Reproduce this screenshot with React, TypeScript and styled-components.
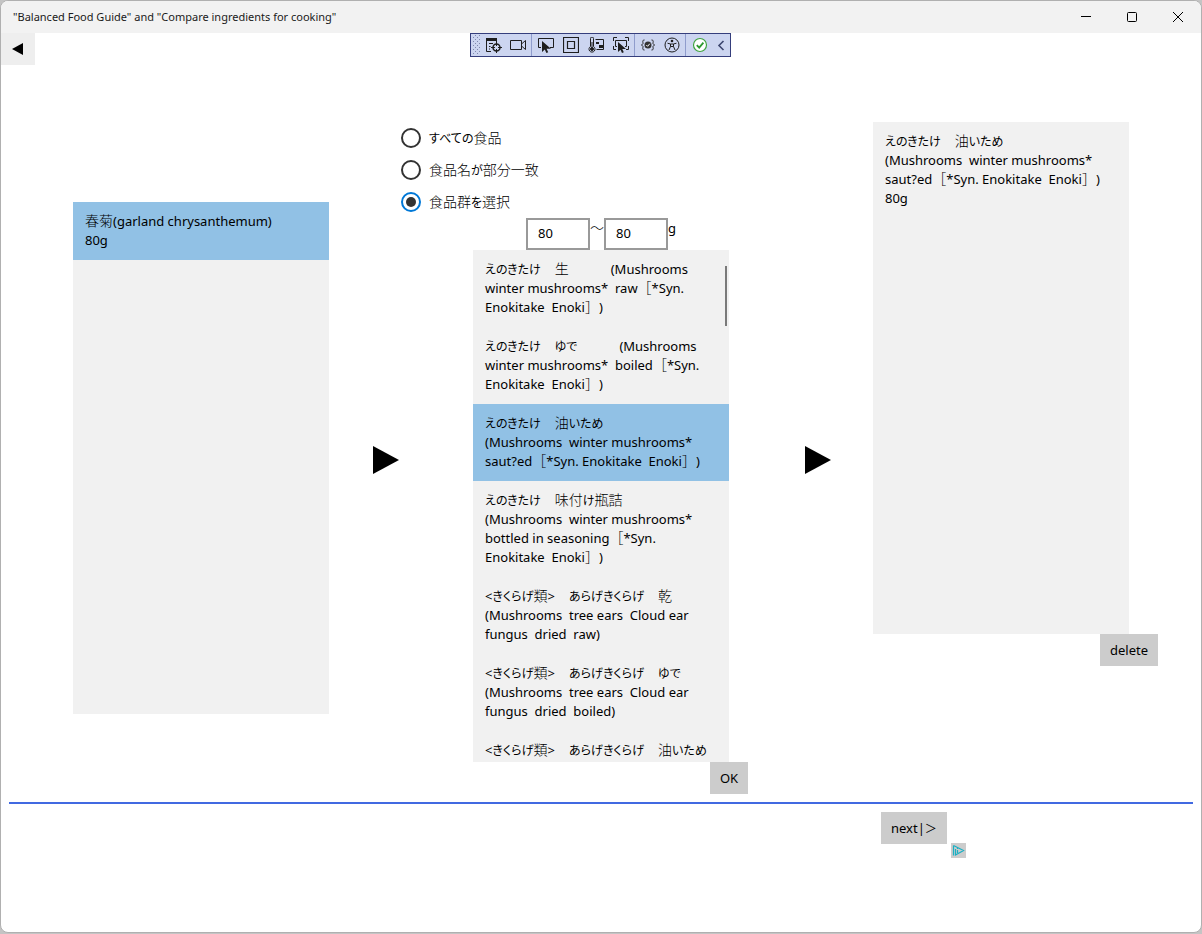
import React, { useState } from "react";
import styled, { createGlobalStyle } from "styled-components";

const GlobalStyle = createGlobalStyle`
  *, *::before, *::after { box-sizing: border-box; }
  body {
    margin: 0;
    background: #c4c4c4;
    color: #000;
    font-family: "Noto Sans", "Noto Sans CJK JP", sans-serif;
    font-size: 13px;
    line-height: 19px;
    text-spacing-trim: space-all;
  }
  button, input { font: inherit; color: inherit; margin: 0; }
  button { border: 0; padding: 0; background: none; }
`;

const AppWindow = styled.div`
  position: relative;
  display: flex;
  flex-direction: column;
  min-height: calc(100vh - 1px);
  border: 1px solid #b0b0b0;
  border-radius: 8px;
  background: #fff;
  overflow: hidden;
`;

const TitleBar = styled.header`
  display: flex;
  align-items: center;
  justify-content: space-between;
  height: 32px;
  padding-left: 12px;
  background: #f2f2f2;
`;

const Title = styled.h1`
  margin: 0;
  font-size: 11px;
  line-height: 16px;
  font-weight: 400;
  color: #1a1a1a;
`;

const WindowControls = styled.div`
  display: flex;
`;

const WindowButton = styled.button`
  display: grid;
  place-items: center;
  width: 46px;
  height: 32px;
`;

const BackButton = styled.button`
  display: grid;
  place-items: center;
  width: 34px;
  height: 32px;
  background: #eee;
`;

const DebugBar = styled.div`
  position: absolute;
  top: 32px;
  left: 0;
  right: 1px;
  width: fit-content;
  margin: 0 auto;
  display: flex;
  align-items: center;
  height: 24px;
  border: 1px solid #353e7c;
  background: #ccd5f0;
  color: #1e1e1e;
`;

const ToolButton = styled.button<{ $width?: number }>`
  display: grid;
  place-items: center;
  width: ${(p) => p.$width ?? 24}px;
  height: 22px;
`;

const ToolGroup = styled.div`
  display: flex;
  padding: 0 1px;
  & + & { border-left: 1px solid #8f9ccc; }
`;

const Main = styled.main`
  display: grid;
  grid-template-columns: repeat(3, 1fr);
  margin-top: 57px;
  padding-bottom: 4px;
`;

const Column = styled.section`
  display: grid;
  grid-template-columns: minmax(0, 1fr) 256px minmax(0, 1fr);
  align-items: center;
  min-height: 676px;
`;

const Stack = styled.div<{ $offset?: number }>`
  grid-column: 2;
  align-self: start;
  display: flex;
  flex-direction: column;
  padding-top: ${(p) => p.$offset ?? 0}px;
`;

const ArrowButton = styled.button<{ $side: "left" | "right" }>`
  grid-column: ${(p) => (p.$side === "right" ? 3 : 1)};
  grid-row: 1;
  justify-self: ${(p) => (p.$side === "right" ? "end" : "start")};
  display: grid;
  padding: 0 2px 0 4px;
`;

const CenterColumn = styled.section`
  display: flex;
  flex-direction: column;
`;

const FilterOptions = styled.div`
  display: flex;
  flex-direction: column;
`;

const RadioLabel = styled.label`
  display: flex;
  align-items: center;
  gap: 8px;
  height: 32px;
`;

const Radio = styled.input`
  appearance: none;
  display: grid;
  place-items: center;
  width: 20px;
  height: 20px;
  border: 2px solid #333;
  border-radius: 50%;
  background: #fff;
  &:checked { border-color: #0078d7; }
  &:checked::before {
    content: "";
    width: 10px;
    height: 10px;
    border-radius: 50%;
    background: #333;
  }
`;

const RangeRow = styled.div`
  display: flex;
  justify-content: center;
`;

const RangeInput = styled.input`
  width: 64px;
  height: 32px;
  padding: 0 10px 2px;
  border: 2px solid #999;
  background: #fff;
`;

const RangeText = styled.span`
  min-width: 8px;
  line-height: 21px;
`;

const CenterStack = styled.div`
  display: flex;
  flex-direction: column;
  align-self: center;
  width: 256px;
`;

const ListBox = styled.div`
  position: relative;
  height: 512px;
  background: #f1f1f1;
  overflow: hidden;
`;

const List = styled.ul`
  margin: 0;
  padding: 0;
  list-style: none;
`;

const ListItem = styled.button<{ $selected?: boolean }>`
  display: block;
  width: 100%;
  padding: 10px 12px;
  text-align: left;
  background: ${(p) => (p.$selected ? "#91c1e5" : "transparent")};
`;

const Line = styled.span`
  display: block;
  height: 19px;
  line-height: 19px;
  white-space: pre;
`;

const Kanji = styled.span`
  font-family: "Noto Sans CJK JP", sans-serif;
  font-size: 14px;
  font-weight: 300;
  line-height: 14px;
`;

const Kana = styled(Kanji)`
  font-size: 12px;
  font-weight: 400;
  font-feature-settings: "palt";
`;

const ScrollThumb = styled.div`
  position: absolute;
  top: 16px;
  right: 2px;
  width: 2px;
  height: 60px;
  background: #7a7a7a;
`;

const CornerSlot = styled.div`
  display: flex;
  justify-content: center;
  width: 0;
  margin-left: auto;
`;

const ActionButton = styled.button`
  flex: none;
  height: 32px;
  padding: 0 10px;
  background: #ccc;
  white-space: pre;
`;

const Divider = styled.hr`
  width: auto;
  height: 2px;
  margin: 0 8px;
  border: 0;
  background: #4169e1;
`;

const Footer = styled.footer`
  display: grid;
  grid-template-columns: repeat(3, 1fr);
  padding-top: 8px;
`;

const FooterActions = styled.div`
  grid-column: 3;
  display: flex;
  align-items: flex-start;
  gap: 4px;
  padding-left: 80px;
`;

const AdChoice = styled.a`
  display: grid;
  place-items: center;
  width: 15px;
  height: 15px;
  margin-top: 31px;
  background: #ccc;
`;

const scriptRuns = /([\u3040-\u30ff\uff1e]+|[\u3000\u4e00-\u9fff\uff3b\uff3d\uff5e]+)/;
const kanaRun = /^[\u3040-\u30ff\uff1e]/;

function MixedText({ text }: { text: string }) {
  return (
    <>
      {text.split(scriptRuns).map((part, i) => {
        if (i % 2 === 0) return part;
        const Run = kanaRun.test(part) ? Kana : Kanji;
        return <Run key={i} lang="ja">{part}</Run>;
      })}
    </>
  );
}

interface FoodListProps {
  items: string[][];
  selected?: number;
  onSelect?: (index: number) => void;
  label: string;
  scrollable?: boolean;
}

function FoodList({ items, selected, onSelect, label, scrollable }: FoodListProps) {
  return (
    <ListBox>
      <List aria-label={label}>
        {items.map((lines, i) => (
          <li key={i}>
            <ListItem
              type="button"
              $selected={i === selected}
              aria-pressed={i === selected}
              onClick={() => onSelect?.(i)}
            >
              {lines.map((line, n) => (
                <Line key={n}><MixedText text={line} /></Line>
              ))}
            </ListItem>
          </li>
        ))}
      </List>
      {scrollable && <ScrollThumb />}
    </ListBox>
  );
}

const recipeItems = [["春菊(garland chrysanthemum)", "80g"]];

const foodItems = [
  ["えのきたけ　生　　　(Mushrooms", "winter mushrooms*  raw［*Syn.", "Enokitake  Enoki］)"],
  ["えのきたけ　ゆで　　　(Mushrooms", "winter mushrooms*  boiled［*Syn.", "Enokitake  Enoki］)"],
  ["えのきたけ　油いため", "(Mushrooms  winter mushrooms*", "saut?ed［*Syn. Enokitake  Enoki］)"],
  ["えのきたけ　味付け瓶詰", "(Mushrooms  winter mushrooms*", "bottled in seasoning［*Syn.", "Enokitake  Enoki］)"],
  ["<きくらげ類>　あらげきくらげ　乾", "(Mushrooms  tree ears  Cloud ear", "fungus  dried  raw)"],
  ["<きくらげ類>　あらげきくらげ　ゆで", "(Mushrooms  tree ears  Cloud ear", "fungus  dried  boiled)"],
  ["<きくらげ類>　あらげきくらげ　油いため"],
];

const chosenItems = [
  ["えのきたけ　油いため", "(Mushrooms  winter mushrooms*", "saut?ed［*Syn. Enokitake  Enoki］)", "80g"],
];

const filters = ["すべての食品", "食品名が部分一致", "食品群を選択"];

function Icon({ children }: { children: React.ReactNode }) {
  return (
    <svg width="16" height="16" viewBox="0 0 16 16" fill="none" stroke="currentColor" aria-hidden="true">
      {children}
    </svg>
  );
}

function DebugToolbar() {
  return (
    <DebugBar role="toolbar" aria-label="Debug tools">
      <svg width="10" height="22" viewBox="0 0 10 22" fill="#8089ae" aria-hidden="true">
        {[3, 7, 11, 15, 19].map((y) => (
          <path key={y} d={`M2 ${y}h1v1h-1zM6 ${y}h1v1h-1zM4 ${y - 2}h1v1h-1zM8 ${y - 2}h1v1h-1z`} />
        ))}
      </svg>
      <ToolGroup>
        <ToolButton aria-label="Live visual tree">
          <Icon>
            <path d="M0 1h11v3H0z" fill="currentColor" stroke="none" />
            <path d="M.5 2v12.500H5M3 6.500h4M3 9.500h1.500M3 12h1M10.500 3v2" />
            <circle cx="10.500" cy="10.500" r="3.500" strokeWidth="1.500" />
            <path d="M10.500 5v4M10.500 12v4M5 10.500h4M12 10.500h4" />
          </Icon>
        </ToolButton>
        <ToolButton aria-label="Record">
          <Icon><path d="M.5 3.500h11v9H.5zM11.500 7l4-3.500v9l-4-3.500" /></Icon>
        </ToolButton>
      </ToolGroup>
      <ToolGroup>
        <ToolButton $width={25} aria-label="Select element">
          <Icon>
            <path d="M3 10.500H.5v-9h15v9H12" />
            <path d="M4 4v11l2.800-2.500 1.600 3.500 1.800-.8-1.600-3.400H13z" fill="currentColor" stroke="none" />
          </Icon>
        </ToolButton>
        <ToolButton $width={25} aria-label="Display layout adorners">
          <Icon><path d="M.5 .5h15v15H.5zM4.500 4.500h7v7h-7z" strokeWidth="1.200" /></Icon>
        </ToolButton>
        <ToolButton $width={25} aria-label="Preview selection">
          <Icon>
            <path d="M2.500 9.500v-8a1.500 1.500 0 0 1 3 0v8a3 3 0 1 1-3 0z" />
            <path d="M4 5v7" /><circle cx="4" cy="12" r="1.500" fill="currentColor" />
            <path d="M7.500 2.500h8v10h-7" />
            <path d="M8 5h3v2H8zM11 8h4v3h-4z" fill="currentColor" stroke="none" />
          </Icon>
        </ToolButton>
        <ToolButton $width={25} aria-label="Track focused element">
          <Icon>
            <path d="M.5 4V.5H4M12 .5h3.500V4M.5 9v3.500H3M15.500 9v3.500H13M4 9.500H2.500v-6h11v6H12" />
            <path d="M5 5v10l2.500-2.300L9 16l1.800-.8-1.500-3.200H13z" fill="currentColor" stroke="none" />
          </Icon>
        </ToolButton>
      </ToolGroup>
      <ToolGroup>
        <ToolButton aria-label="Binding failures">
          <Icon>
            <path d="M4.500 3C2 3 3 5 3 6.500L1.500 8 3 9.500C3 11 2 13 4.500 13M11.500 3C14 3 13 5 13 6.500L14.500 8 13 9.500C13 11 14 13 11.500 13" />
            <circle cx="8" cy="8" r="3.500" fill="#333" stroke="none" />
            <path d="M6.300 8l1.300 1.300 2.200-2.600" stroke="#fff" />
          </Icon>
        </ToolButton>
        <ToolButton aria-label="Scan for accessibility issues">
          <Icon>
            <circle cx="8" cy="8" r="7" />
            <circle cx="8" cy="4" r="1.300" fill="currentColor" stroke="none" />
            <path d="M3.500 6.200L6.500 7h3l3-.8M6.500 7v2.500L5 13M9.500 7v2.500L11 13M6.500 9.500h3" />
          </Icon>
        </ToolButton>
      </ToolGroup>
      <ToolGroup>
        <ToolButton $width={25} aria-label="Hot reload available">
          <Icon>
            <circle cx="8" cy="8" r="6.500" fill="#fff" stroke="#3ea33e" strokeWidth="1.200" />
            <path d="M4.800 8.200l2.400 2.500 4.200-5" stroke="#2e9a2e" strokeWidth="1.800" />
          </Icon>
        </ToolButton>
        <ToolButton $width={17} aria-label="Collapse toolbar">
          <Icon><path d="M10.500 4L6 8.500l4.500 4.500" stroke="#3d466f" strokeWidth="1.600" /></Icon>
        </ToolButton>
      </ToolGroup>
    </DebugBar>
  );
}

function MoveArrow({ side, label }: { side: "left" | "right"; label: string }) {
  return (
    <ArrowButton type="button" $side={side} aria-label={label}>
      <svg width="26" height="28" viewBox="0 0 26 28" aria-hidden="true">
        <path d="M0 0l26 14L0 28z" />
      </svg>
    </ArrowButton>
  );
}

export default function App() {
  const [filter, setFilter] = useState(2);
  const [food, setFood] = useState(2);

  return (
    <>
      <GlobalStyle />
      <AppWindow>
        <TitleBar>
          <Title>"Balanced Food Guide" and "Compare ingredients for cooking"</Title>
          <WindowControls>
            <WindowButton aria-label="Minimize">
              <svg width="10" height="10" viewBox="0 0 10 10" stroke="#000"><path d="M0 4.500h10" /></svg>
            </WindowButton>
            <WindowButton aria-label="Maximize">
              <svg width="10" height="10" viewBox="0 0 10 10" stroke="#000" fill="none"><rect x=".5" y=".5" width="9" height="9" rx="1" /></svg>
            </WindowButton>
            <WindowButton aria-label="Close">
              <svg width="10" height="10" viewBox="0 0 10 10" stroke="#000"><path d="M0 0l10 10M10 0L0 10" /></svg>
            </WindowButton>
          </WindowControls>
        </TitleBar>
        <DebugToolbar />
        <BackButton aria-label="Back">
          <svg width="12" height="12" viewBox="0 0 12 12" aria-hidden="true"><path d="M11 0v12L0 6z" /></svg>
        </BackButton>

        <Main>
          <Column>
            <Stack $offset={80}>
              <FoodList label="Recipe ingredients" items={recipeItems} selected={0} />
            </Stack>
            <MoveArrow side="right" label="Compare ingredient" />
          </Column>

          <CenterColumn>
            <FilterOptions role="radiogroup" aria-label="Food filter">
              {filters.map((text, i) => (
                <RadioLabel key={text}>
                  <Radio type="radio" name="filter" checked={filter === i} onChange={() => setFilter(i)} />
                  <Line><MixedText text={text} /></Line>
                </RadioLabel>
              ))}
            </FilterOptions>
            <RangeRow>
              <RangeInput type="text" defaultValue="80" aria-label="Minimum grams" />
              <RangeText><MixedText text="～" /></RangeText>
              <RangeInput type="text" defaultValue="80" aria-label="Maximum grams" />
              <RangeText>g</RangeText>
            </RangeRow>
            <CenterStack>
              <FoodList label="Foods" items={foodItems} selected={food} onSelect={setFood} scrollable />
              <CornerSlot><ActionButton type="button">OK</ActionButton></CornerSlot>
            </CenterStack>
          </CenterColumn>

          <Column>
            <MoveArrow side="left" label="Add food" />
            <Stack>
              <FoodList label="Chosen foods" items={chosenItems} />
              <CornerSlot><ActionButton type="button">delete</ActionButton></CornerSlot>
            </Stack>
          </Column>
        </Main>

        <Divider />
        <Footer>
          <FooterActions>
            <ActionButton type="button"><MixedText text="next|＞" /></ActionButton>
            <AdChoice href="#ad" aria-label="Ad choices">
              <svg width="13" height="13" viewBox="0 0 13 13" fill="none" stroke="#19b0c4" aria-hidden="true">
                <path d="M1.500 1.500v10M1.500 1.500L11.500 6.500l-8 4.500V5M5.500 6v3M5.500 4v1" strokeWidth="1.200" />
              </svg>
            </AdChoice>
          </FooterActions>
        </Footer>
      </AppWindow>
    </>
  );
}
